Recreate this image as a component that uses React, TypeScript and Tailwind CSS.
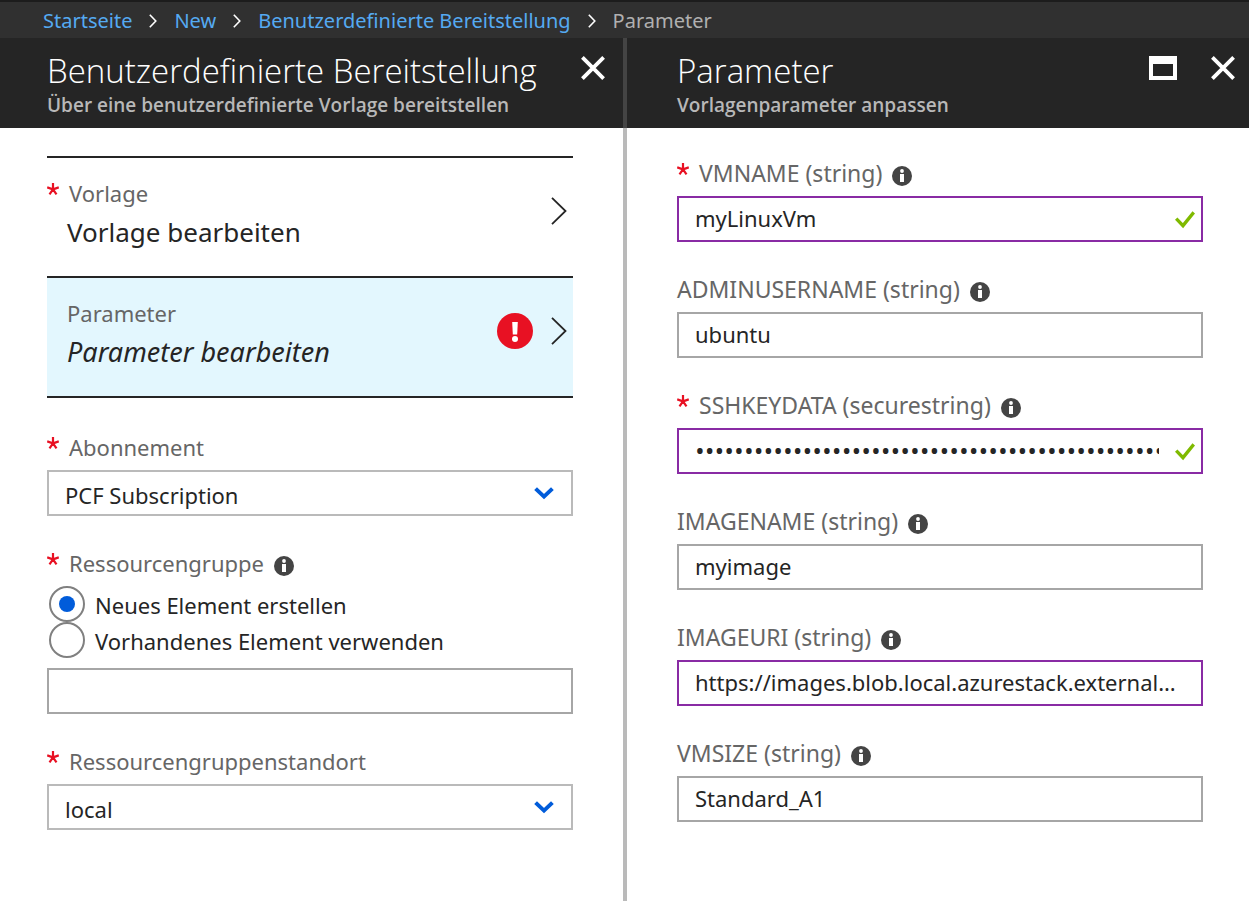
import { useState, type ReactNode } from "react";

function CloseIcon() {
  return (
    <svg width="24" height="24" viewBox="0 0 24 24" fill="none" stroke="#fff" strokeWidth="3.8" aria-hidden="true">
      <path d="M1.4 1.4 22.6 22.6M22.6 1.4 1.4 22.6" />
    </svg>
  );
}

function MaximizeIcon() {
  return (
    <svg width="28" height="24" viewBox="0 0 28 24" fill="#fff" fillRule="evenodd" aria-hidden="true">
      <path d="M0 0H28V24H0ZM4 8V20H24V8Z" />
    </svg>
  );
}

function CrumbChevron() {
  return (
    <svg width="8" height="14" viewBox="0 0 8 14" fill="none" stroke="#fff" strokeWidth="1.6" aria-hidden="true">
      <path d="M.8.8 6.8 7 .8 13.2" />
    </svg>
  );
}

function RowChevron() {
  return (
    <svg width="16" height="28" viewBox="0 0 16 28" fill="none" stroke="#252525" strokeWidth="1.8" aria-hidden="true">
      <path d="M1 .8 14.5 14 1 27.2" />
    </svg>
  );
}

function ErrorIcon() {
  return (
    <svg width="36" height="36" viewBox="0 0 36 36" role="img" aria-label="Fehler">
      <circle cx="18" cy="18" r="18" fill="#e81123" />
      <path d="M15.2 9H20.8L20.2 21.5H15.8Z" fill="#fff" />
      <circle cx="18" cy="26" r="3" fill="#fff" />
    </svg>
  );
}

function InfoIcon() {
  return (
    <svg className="mt-[6px] shrink-0" width="20" height="20" viewBox="0 0 20 20" role="img" aria-label="Info">
      <circle cx="10" cy="10" r="10" fill="#444" />
      <circle cx="10" cy="5" r="1.9" fill="#fff" />
      <path d="M8 8H12V16H8Z" fill="#fff" />
    </svg>
  );
}

function CheckIcon() {
  return (
    <svg
      className="pointer-events-none absolute top-[15px] right-2"
      width="20"
      height="18"
      viewBox="0 0 20 18"
      fill="none"
      stroke="#7fba00"
      strokeWidth="3.4"
      aria-hidden="true"
    >
      <path d="M1.2 7.6 8 14.6 18.8 1.4" />
    </svg>
  );
}

function CaretIcon() {
  return (
    <svg
      className="pointer-events-none absolute top-[17px] right-[19px]"
      width="20"
      height="13"
      viewBox="0 0 20 13"
      fill="none"
      stroke="#015cda"
      strokeWidth="4"
      aria-hidden="true"
    >
      <path d="M1.6 1.6 10 9.6 18.4 1.6" />
    </svg>
  );
}

function Asterisk() {
  return (
    <svg className="-mt-2 mr-[10px] shrink-0" width="12" height="12" viewBox="0 0 12 12" fill="none" stroke="#e81123" strokeWidth="2.2" aria-hidden="true">
      <path d="M6 6.4V0M6 6.4.2 4.4M6 6.4 11.8 4.4M6 6.4 2.5 11.3M6 6.4 9.5 11.3" />
    </svg>
  );
}

function LabelLine({
  required,
  info,
  large,
  children,
}: {
  required?: boolean;
  info?: boolean;
  large?: boolean;
  children: ReactNode;
}) {
  return (
    <span className={`flex h-11 items-center pb-[2px] leading-8 text-[#666] ${large ? "text-[23px]" : "text-[22px]"}`}>
      {required && <Asterisk />}
      <span>{children}</span>
      {info && (
        <span className="ml-[10px]">
          <InfoIcon />
        </span>
      )}
    </span>
  );
}

type ParamProps = {
  id: string;
  label: string;
  value: string;
  required?: boolean;
  edited?: boolean;
  valid?: boolean;
  secret?: boolean;
};

function ParamField({ id, label, value, required, edited, valid, secret }: ParamProps) {
  return (
    <div>
      <label htmlFor={id}>
        <LabelLine required={required} info large>
          {label}
        </LabelLine>
      </label>
      <div className="relative">
        <input
          id={id}
          type={secret ? "password" : "text"}
          defaultValue={value}
          className={`block h-[46px] w-full border-2 bg-white pb-[2px] pl-4 text-[#252525] outline-none ${
            secret ? "font-['Open_Sans',sans-serif] text-[26px]" : "text-[22px]"
          } ${edited ? "border-[#892ba4]" : "border-[#a6a6a6]"} ${valid ? "pr-[42px]" : "pr-4"}`}
        />
        {valid && <CheckIcon />}
      </div>
    </div>
  );
}

function SelectField({ id, label, option }: { id: string; label: string; option: string }) {
  return (
    <div>
      <label htmlFor={id}>
        <LabelLine required>{label}</LabelLine>
      </label>
      <div className="relative">
        <select
          id={id}
          className="block h-[46px] w-full appearance-none border-2 border-[#bababa] bg-white pt-1 pr-12 pl-4 text-[22px] text-[#252525] outline-none"
        >
          <option>{option}</option>
        </select>
        <CaretIcon />
      </div>
    </div>
  );
}

function StepRow({
  label,
  value,
  required,
  active,
  error,
}: {
  label: string;
  value: string;
  required?: boolean;
  active?: boolean;
  error?: boolean;
}) {
  return (
    <button
      type="button"
      className={`flex h-[120px] w-full items-start border-t-2 border-[#252525] text-left ${active ? "bg-[#e3f7fe]" : "bg-white"}`}
    >
      <span className="flex-1 pt-[14px]">
        <span className={`block ${required ? "" : "pl-5"}`}>
          <LabelLine required={required}>{label}</LabelLine>
        </span>
        <span
          className={`-mt-1 block pl-5 leading-10 text-[#252525] ${active ? "text-[27px] italic" : "text-[26px]"}`}
        >
          {value}
        </span>
      </span>
      <span className="flex h-[106px] items-center gap-[18px] pr-[6px]">
        {error && <ErrorIcon />}
        <RowChevron />
      </span>
    </button>
  );
}

function Radio({ label, checked, onChange }: { label: string; checked: boolean; onChange: () => void }) {
  return (
    <label className="flex h-9 items-center gap-[10px] pl-[2px] text-[22px] text-[#252525]">
      <input
        type="radio"
        name="resource-group-mode"
        checked={checked}
        onChange={onChange}
        className="grid size-9 shrink-0 appearance-none place-items-center rounded-full border-2 border-[#808080] bg-white before:size-4 before:rounded-full before:content-[''] checked:before:bg-[#015cda]"
      />
      <span className="pt-[2px]">{label}</span>
    </label>
  );
}

function PanelHeader({ title, subtitle, children }: { title: string; subtitle: string; children: ReactNode }) {
  return (
    <header className="flex h-[90px] items-start justify-between bg-[#252525] font-['Open_Sans','Noto_Sans',sans-serif]">
      <div className="pt-[11px]">
        <h1 className="text-[33px] leading-[44px] font-light whitespace-nowrap text-white">{title}</h1>
        <p className="text-[19px] leading-6 font-semibold whitespace-nowrap text-[#b8b8b8]">{subtitle}</p>
      </div>
      <div className="flex gap-[34px] pt-[18px]">{children}</div>
    </header>
  );
}

const crumbs = ["Startseite", "New", "Benutzerdefinierte Bereitstellung"];

const params: ParamProps[] = [
  { id: "vmname", label: "VMNAME (string)", value: "myLinuxVm", required: true, edited: true, valid: true },
  { id: "adminusername", label: "ADMINUSERNAME (string)", value: "ubuntu" },
  { id: "sshkeydata", label: "SSHKEYDATA (securestring)", value: "x".repeat(80), required: true, edited: true, valid: true, secret: true },
  { id: "imagename", label: "IMAGENAME (string)", value: "myimage" },
  { id: "imageuri", label: "IMAGEURI (string)", value: "https://images.blob.local.azurestack.external…", edited: true },
  { id: "vmsize", label: "VMSIZE (string)", value: "Standard_A1" },
];

export default function App() {
  const [createNew, setCreateNew] = useState(true);
  return (
    <div className="flex min-h-screen flex-col bg-white font-['Noto_Sans','Open_Sans',sans-serif]">
      <nav className="flex h-[38px] items-center gap-[17px] border-t-2 border-[#1c1c1c] bg-[#303030] pt-[2px] pl-[43px] text-[20px] whitespace-nowrap">
        {crumbs.map((c) => (
          <span key={c} className="flex items-center gap-[17px]">
            <a href="#" className="text-[#55aaf2]">
              {c}
            </a>
            <CrumbChevron />
          </span>
        ))}
        <span className="text-[#b0b0b0]">Parameter</span>
      </nav>
      <main className="grid flex-1 grid-cols-[minmax(0,623fr)_4px_minmax(0,622fr)]">
        <section>
          <div className="bg-[#252525] pr-[18px] pl-[47px]">
            <PanelHeader title="Benutzerdefinierte Bereitstellung" subtitle="Über eine benutzerdefinierte Vorlage bereitstellen">
              <button type="button" aria-label="Schließen">
                <CloseIcon />
              </button>
            </PanelHeader>
          </div>
          <form className="pt-7 pr-[50px] pb-7 pl-[47px]">
            <div className="mb-7 border-b-2 border-[#252525]">
              <StepRow label="Vorlage" value="Vorlage bearbeiten" required />
              <StepRow label="Parameter" value="Parameter bearbeiten" active error />
            </div>
            <div className="flex flex-col gap-[26px]">
              <SelectField id="subscription" label="Abonnement" option="PCF Subscription" />
              <div>
                <label htmlFor="resource-group">
                  <LabelLine required info>
                    Ressourcengruppe
                  </LabelLine>
                </label>
                <Radio label="Neues Element erstellen" checked={createNew} onChange={() => setCreateNew(true)} />
                <Radio label="Vorhandenes Element verwenden" checked={!createNew} onChange={() => setCreateNew(false)} />
                <input
                  id="resource-group"
                  type="text"
                  className="mt-[10px] block h-[46px] w-full border-2 border-[#a6a6a6] bg-white px-4 text-[22px] text-[#252525] outline-none"
                />
              </div>
              <SelectField id="location" label="Ressourcengruppenstandort" option="local" />
            </div>
          </form>
        </section>
        <div className="flex flex-col bg-[#bababa]" aria-hidden="true">
          <div className="h-[90px] bg-[#444]" />
        </div>
        <section>
          <div className="bg-[#252525] pr-[14px] pl-[50px]">
            <PanelHeader title="Parameter" subtitle="Vorlagenparameter anpassen">
              <button type="button" aria-label="Maximieren">
                <MaximizeIcon />
              </button>
              <button type="button" aria-label="Schließen">
                <CloseIcon />
              </button>
            </PanelHeader>
          </div>
          <form className="flex flex-col gap-[26px] pt-6 pr-[46px] pb-7 pl-[50px]">
            {params.map((p) => (
              <ParamField key={p.id} {...p} />
            ))}
          </form>
        </section>
      </main>
    </div>
  );
}
